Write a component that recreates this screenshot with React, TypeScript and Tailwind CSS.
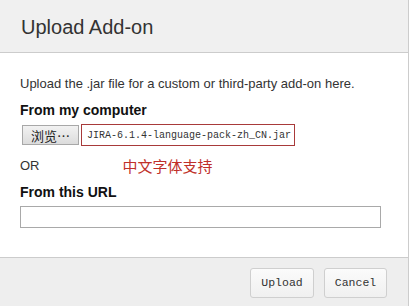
import React from 'react';

const sans = "font-['Liberation_Sans',Arial,sans-serif]";
const mono = "font-['Liberation_Mono','Noto_Sans_CJK_SC',monospace]";

export default function App() {
  return (
    <div className={`flex flex-col w-[409px] h-[306px] bg-white border-r border-[#cccccc] text-[#333333] ${sans}`}>
      {/* Header */}
      <div className="h-[53px] shrink-0 bg-[#f0f0f0] border-b border-[#cccccc] flex items-center pl-[21px]">
        <h2 className="text-[20px] leading-[24px] font-normal text-[#333333] mt-[2px]">Upload Add-on</h2>
      </div>

      {/* Body */}
      <div className="flex-1 pl-[20px] pt-[23px]">
        <p className="text-[13px] leading-[16px]">
          Upload the .jar file for a custom or third-party add-on here.
        </p>
        <div className="mt-[9px] text-[14px] leading-[18px] font-bold text-[#111111]">From my computer</div>
        <div className="mt-[5px] flex items-center gap-[2px]">
          <button className="ml-[2px] w-[57px] h-[20px] border border-[#a8a8a8] bg-gradient-to-b from-[#f2f2f2] to-[#dcdcdc] text-[13px] leading-none text-[#222222] font-['Noto_Sans_CJK_SC',sans-serif] flex items-center justify-center">
            浏览…
          </button>
          <div className={`w-[214px] h-[22px] border border-[#a83a3a] flex items-center pl-[5px] text-[10px] text-[#333333] ${mono}`}>
            JIRA-6.1.4-language-pack-zh_CN.jar
          </div>
        </div>
        <div className="mt-[11px] flex items-center h-[18px]">
          <span className="text-[13px] leading-[16px] text-[#333333]">OR</span>
          <span className="ml-[83px] text-[15px] leading-[18px] text-[#c0302a] font-['Noto_Sans_CJK_SC',sans-serif]">中文字体支持</span>
        </div>
        <div className="mt-[8px] text-[14px] leading-[18px] font-bold text-[#111111]">From this URL</div>
        <input
          type="text"
          className="mt-[5px] block w-[361px] h-[22px] border border-[#a9a9a9] bg-white outline-none"
        />
      </div>

      {/* Footer */}
      <div className="h-[49px] shrink-0 bg-[#eeeeee] border-t border-[#cccccc] flex justify-end items-start pt-[10px] pr-[21px] gap-[10px]">
        <button className={`w-[64px] h-[30px] rounded-[3px] border border-[#cfcfcf] bg-gradient-to-b from-[#fbfbfb] to-[#f0f0f0] text-[11.5px] text-[#333333] ${mono}`}>
          Upload
        </button>
        <button className={`w-[63px] h-[30px] rounded-[3px] border border-[#cfcfcf] bg-gradient-to-b from-[#fbfbfb] to-[#f0f0f0] text-[11.5px] text-[#333333] ${mono}`}>
          Cancel
        </button>
      </div>
    </div>
  );
}
